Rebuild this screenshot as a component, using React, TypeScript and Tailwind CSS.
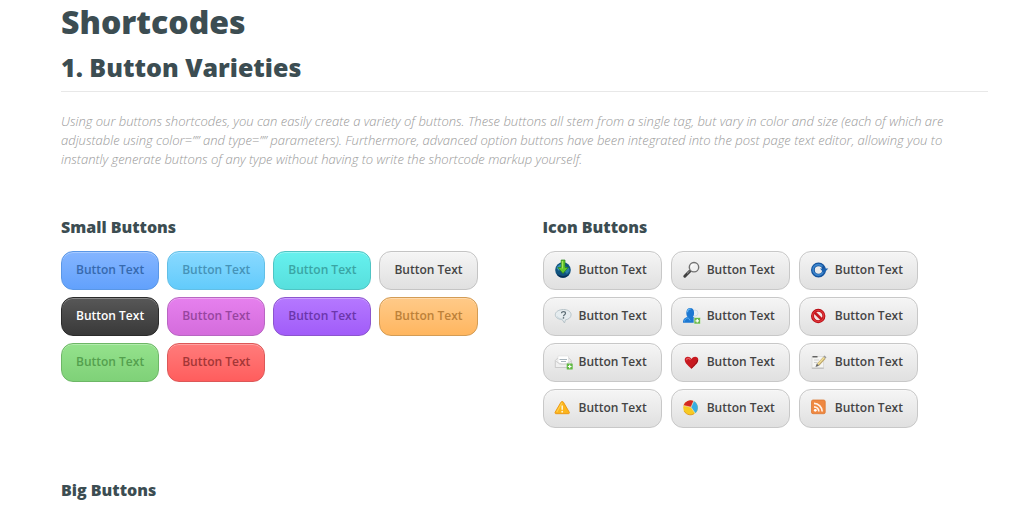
import type { ReactNode } from "react";

type SmallButton = { name: string; look: string };

const smallButtons: SmallButton[] = [
  { name: "blue", look: "border-[#5a97e6] from-[#84b5ff] to-[#62a1fc] text-[#3669ae]" },
  { name: "sky", look: "border-[#62bfe6] from-[#88d9ff] to-[#62cbfb] text-[#4693b8]" },
  { name: "teal", look: "border-[#4fc4c4] from-[#66f1ee] to-[#57dfdd] text-[#3aa5a4]" },
  { name: "white", look: "border-[#c4c4c4] from-[#f5f5f5] to-[#e0e0e0] text-[#444444]" },
  { name: "black", look: "border-[#2b2b2b] from-[#585858] to-[#393939] text-white" },
  { name: "pink", look: "border-[#b866c2] from-[#e680ee] to-[#d46cdc] text-[#97459f]" },
  { name: "purple", look: "border-[#8c55ce] from-[#b578ff] to-[#a15cf9] text-[#6b36ab]" },
  { name: "orange", look: "border-[#d39c55] from-[#ffca88] to-[#ffb65f] text-[#bd8139]" },
  { name: "green", look: "border-[#6db766] from-[#94e28c] to-[#7fd178] text-[#54a04e]" },
  { name: "red", look: "border-[#dc5858] from-[#ff7b7b] to-[#ff5d5d] text-[#a33636]" },
];

function Icon({ children }: { children: ReactNode }) {
  return (
    <svg viewBox="0 0 16 16" className="h-4 w-4 shrink-0 overflow-visible" fill="none" aria-hidden="true">
      {children}
    </svg>
  );
}

const icons: { name: string; drawing: ReactNode }[] = [
  {
    name: "download",
    drawing: (
      <>
        <circle cx="8" cy="8" r="7.800" fill="#11547f" />
        <path d="M1.500 6c1.500-3 3.500-4 5-4.300L5.500 6 4 9z" fill="#3a93b9" />
        <path d="M10 4l4 2 .6 3-2.600 3-2-2z" fill="#2a7ba7" />
        <path d="M1.500 11.500c3 3.200 10 3.200 13 0-1 2.500-3.500 4.300-6.500 4.300s-5.500-1.500-6.500-4.300z" fill="#082f58" />
        <path d="M6.200-2h3.800v7.500h3.200L8 11.500 2.900 5.500h3.300z" fill="#62c72d" stroke="#288319" strokeWidth=".7" />
        <path d="M7.300-1v7.500" stroke="#b4ed64" />
      </>
    ),
  },
  {
    name: "search",
    drawing: (
      <>
        <path d="M7 9l-5.200 5.200" stroke="#414141" strokeWidth="3" strokeLinecap="round" />
        <path d="M6.600 9L4 11.500" stroke="#aaa" />
        <circle cx="11" cy="5.200" r="4.700" fill="#f1f1f1" stroke="#737373" strokeWidth="1.400" />
        <path d="M8.200 5a3 3 0 0 1 3-2.500" stroke="white" strokeWidth="1.200" />
      </>
    ),
  },
  {
    name: "refresh",
    drawing: (
      <>
        <circle cx="7.500" cy="8" r="5.600" stroke="#16549e" strokeWidth="3.800" />
        <path d="M11.500 4.500A5.400 5.200 0 1 0 12.500 9.500" stroke="#3d87ce" strokeWidth="1.700" />
        <path d="M9 6.500h8.300L13 11z" fill="#1b62b0" />
      </>
    ),
  },
  {
    name: "help",
    drawing: (
      <>
        <path d="M8.500 1.500c4.300 0 7.600 2.200 7.600 5.300 0 2.700-2.600 4.600-5.600 5L9.500 15l-2.300-3.300C3 11.200.3 9.500.3 6.700c0-3 3.700-5.200 8.200-5.200z" fill="#e5ecef" stroke="#b2bfc5" strokeWidth=".9" />
        <path d="M2 8.500c1.500 2 4 2.600 6 2.600" stroke="#c5d4da" />
        <path d="M6.500 5.300c0-2.300 4-2.300 4 0 0 1.500-2 1.400-2 3" stroke="#5d6e76" strokeWidth="1.200" />
        <circle cx="8.500" cy="9.900" r=".8" fill="#5d6e76" />
      </>
    ),
  },
  {
    name: "add user",
    drawing: (
      <>
        <circle cx="12" cy="5" r="3" fill="#e7eef5" stroke="#bdcfdf" strokeWidth=".6" />
        <path d="M0 14.800c0-4 1.600-5 4.500-5.900C2.800 7 2.500 0 7.200 0s4.600 7 2.700 8.900c2.800.9 4 1.900 4 5.900z" fill="#1d78d2" />
        <path d="M4.500 4.200c0-3 2-3.400 3.200-3.100" stroke="#69b9f5" strokeWidth="1.200" />
        <path d="M1.500 13.500c0-2.200 1.500-3 3.700-3.700l2 2.800" stroke="#51a8ee" />
        <rect x="11" y="9.500" width="6.500" height="6.500" rx=".7" fill="#69b94b" stroke="#eef5e9" strokeWidth=".6" />
        <path d="M14.250 11v3.600M12.450 12.800h3.600" stroke="white" strokeWidth="1.200" />
      </>
    ),
  },
  {
    name: "block",
    drawing: (
      <>
        <circle cx="7.200" cy="8" r="5.700" fill="#f3e5e5" stroke="#b70d14" strokeWidth="3" />
        <circle cx="7.200" cy="8" r="5.600" stroke="#e0353a" strokeWidth="1.300" />
        <path d="M3.700 4.500l7 7" stroke="#c51920" strokeWidth="2.600" />
      </>
    ),
  },
  {
    name: "add mail",
    drawing: (
      <>
        <path d="M.3 6.500l3-3h10l3 3v7H.3z" fill="#f0f0f0" stroke="#c2c2c2" strokeWidth=".8" />
        <path d="M3 2h10.500v6.500l-5.200 2L3 8.500z" fill="white" stroke="#d6d6d6" strokeWidth=".5" />
        <path d="M4.500 5.500h7.500M6 7.500h5" stroke="#9caab3" strokeWidth=".9" />
        <path d="M.6 7l4.200 3h7l4.200-3" stroke="#c8c8c8" strokeWidth=".8" />
        <rect x="11.700" y="9.500" width="6" height="6" rx=".6" fill="#61b943" />
        <path d="M14.700 10.700v3.600M12.900 12.500h3.600" stroke="white" strokeWidth="1.200" />
      </>
    ),
  },
  {
    name: "heart",
    drawing: (
      <>
        <path d="M8.500 15C6.500 12.500 1.700 9.500 1.700 5.800c0-3.500 4.800-4.300 6.800-.9 2-3.400 6.800-2.600 6.800.9 0 3.700-4.800 6.700-6.800 9.200z" fill="#c71920" />
        <path d="M3.500 6.300c0-2.200 2.500-2.800 4-.5" stroke="#e8575b" strokeWidth="1.400" />
        <path d="M14.500 6c0 3-3.500 5-6 8" stroke="#8d1017" strokeWidth="1" />
      </>
    ),
  },
  {
    name: "edit",
    drawing: (
      <>
        <path d="M1 2.500h11.500v11.500H1z" fill="#f5f5f3" stroke="#d5d5d2" strokeWidth=".7" />
        <path d="M.8 14.200h12" stroke="#b5b5b5" />
        <path d="M1.500 2.800h5" stroke="#444" strokeWidth="1.200" />
        <path d="M3 6h5M3 8.500h3.500" stroke="#c5c5c5" strokeWidth=".8" />
        <path d="M13.500 3.800L7 10.800" stroke="#b9a267" strokeWidth="3" />
        <path d="M13.300 3.500L7 10.300" stroke="#f3e29b" strokeWidth="1.400" />
        <path d="M12.300 2.500l2.200 2 1-1.200-2-1.900z" fill="#999" />
        <path d="M5.800 9.500L4.500 13l3.600-1.200z" fill="#666" />
      </>
    ),
  },
  {
    name: "warning",
    drawing: (
      <>
        <path d="M7.200 1.500c.8 0 1.200.5 1.600 1.300l5.400 9.300c.5 1 .1 1.600-1 1.600h-12c-1.100 0-1.500-.6-1-1.600l5.400-9.300c.4-.8.8-1.300 1.600-1.300z" fill="#fbb51c" stroke="#eb940e" strokeWidth=".9" />
        <path d="M7 2.800L1.800 12" stroke="#ffd04d" strokeWidth="1.200" />
        <path d="M7.200 5.500v4.200" stroke="#fff6de" strokeWidth="1.500" />
        <circle cx="7.200" cy="11.700" r=".9" fill="#fff6de" />
      </>
    ),
  },
  {
    name: "chart",
    drawing: (
      <>
        <circle cx="7.500" cy="7.700" r="7.300" fill="#f7ca22" />
        <path d="M8 7.200L.5 5.500a7.300 7.300 0 0 1 10.200-4.400z" fill="#d42922" />
        <path d="M8 7.200l2.700-6.100a7.300 7.300 0 0 1 1.500 12.200z" fill="#38ade2" />
        <path d="M8 7.200l2.700-6.100M8 7.200l4.200 6.100M8 7.200L.5 5.500" stroke="#f8efcf" strokeWidth=".6" />
        <path d="M1.200 11.200c2.300 4 7.500 4.500 10 2.300" stroke="#df981b" strokeWidth=".9" />
      </>
    ),
  },
  {
    name: "feed",
    drawing: (
      <>
        <rect x=".5" y="0" width="13.700" height="13.700" rx="1.500" fill="#ef8841" stroke="#dc7933" strokeWidth=".8" />
        <circle cx="4.300" cy="10.300" r="1.400" fill="white" />
        <path d="M3 6.800a4.800 4.800 0 0 1 4.800 4.800M3 3.400a8.200 8.200 0 0 1 8.200 8.200" stroke="#fff2e8" strokeWidth="1.700" />
      </>
    ),
  },
];

const buttonBase =
  "flex h-[39px] items-center rounded-xl border bg-linear-to-b pb-0.5 text-[12px] leading-4 font-semibold whitespace-nowrap inset-shadow-[0_1px_0_rgba(255,255,255,0.3)]";

function SectionTitle({ children }: { children: ReactNode }) {
  return <h3 className="text-[16px] leading-6 font-extrabold text-[#3c4d52]">{children}</h3>;
}

export default function App() {
  return (
    <main className="bg-white pr-9 pl-[61px] font-['Open_Sans',sans-serif]">
      <h1 className="text-[32px] leading-[44px] font-extrabold text-[#3c4d52]">Shortcodes</h1>
      <h2 className="border-b border-[#e8e8e8] pt-1 pb-1 text-[25px] leading-[39px] font-extrabold text-[#3c4d52]">
        1. Button Varieties
      </h2>
      <p className="mt-5 text-[13px] leading-[19px] font-light text-[#999999] italic">
        Using our buttons shortcodes, you can easily create a variety of buttons. These buttons all stem from a single
        tag, but vary in color and size (each of which are adjustable using color=”” and type=”” parameters).
        Furthermore, advanced option buttons have been integrated into the post page text editor, allowing you to
        instantly generate buttons of any type without having to write the shortcode markup yourself.
      </p>
      <div className="mt-[46px] grid grid-cols-2 gap-9">
        <section>
          <SectionTitle>Small Buttons</SectionTitle>
          <div className="mt-3 flex flex-wrap gap-x-2 gap-y-[7px]">
            {smallButtons.map((button) => (
              <button key={button.name} type="button" className={`${buttonBase} px-[14px] ${button.look}`}>
                Button Text
              </button>
            ))}
          </div>
        </section>
        <section>
          <SectionTitle>Icon Buttons</SectionTitle>
          <div className="mt-3 flex flex-wrap gap-x-[9px] gap-y-[7px]">
            {icons.map((icon) => (
              <button
                key={icon.name}
                type="button"
                className={`${buttonBase} gap-2 border-[#c8c8c8] from-[#f5f5f5] to-[#e0e0e0] pr-[14px] pl-[11px] text-[#444444]`}
              >
                <Icon>{icon.drawing}</Icon>
                Button Text
              </button>
            ))}
          </div>
        </section>
      </div>
      <section className="mt-[50px]">
        <SectionTitle>Big Buttons</SectionTitle>
      </section>
    </main>
  );
}
